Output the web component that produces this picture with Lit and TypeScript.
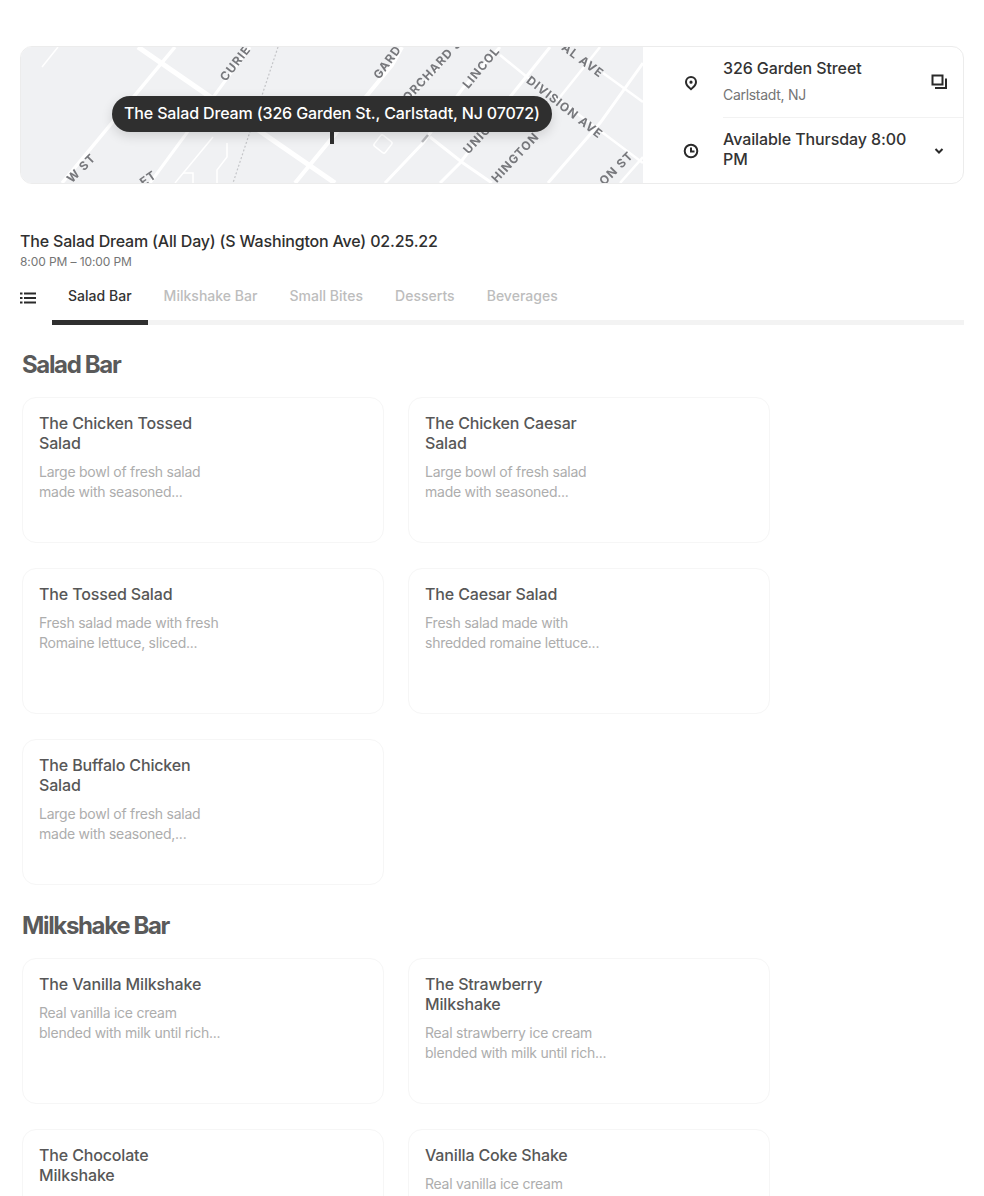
import { LitElement, html, css, svg } from "lit";
import { customElement } from "lit/decorators.js";

interface Item { name: string; desc: string }
const sections: { title: string; items: Item[] }[] = [
  { title: "Salad Bar", items: [
    { name: "The Chicken Tossed\nSalad", desc: "Large bowl of fresh salad\nmade with seasoned..." },
    { name: "The Chicken Caesar\nSalad", desc: "Large bowl of fresh salad\nmade with seasoned..." },
    { name: "The Tossed Salad", desc: "Fresh salad made with fresh\nRomaine lettuce, sliced..." },
    { name: "The Caesar Salad", desc: "Fresh salad made with\nshredded romaine lettuce..." },
    { name: "The Buffalo Chicken\nSalad", desc: "Large bowl of fresh salad\nmade with seasoned,..." },
  ]},
  { title: "Milkshake Bar", items: [
    { name: "The Vanilla Milkshake", desc: "Real vanilla ice cream\nblended with milk until rich..." },
    { name: "The Strawberry\nMilkshake", desc: "Real strawberry ice cream\nblended with milk until rich..." },
    { name: "The Chocolate\nMilkshake", desc: "Real chocolate ice cream\nblended with milk until rich..." },
    { name: "Vanilla Coke Shake", desc: "Real vanilla ice cream\nblended with Coke until rich..." },
  ]},
];
const tabs = ["Salad Bar", "Milkshake Bar", "Small Bites", "Desserts", "Beverages"];

const roads: [string, number][] = [
  ["M138 47 L335 183", 5],
  ["M62 183 L175 47", 3.5],
  ["M250 47 L150 183", 3],
  ["M58 47 L42 67", 1.5],
  ["M213 137 L175 183", 1.5],
  ["M227 143 L227 157 L217 170 L217 183", 1.5],
  ["M183 173 L193 173 L193 183", 1.5],
  ["M295 183 L392 65 L402 47", 4],
  ["M385 183 L423 143 L463 88 L500 47", 3],
  ["M410 97 L443 63", 2.5],
  ["M440 183 L460 163 L510 97 L550 47", 3],
  ["M430 137 L463 163 L492 183", 3],
  ["M500 55 L527 77 L550 93 L643 163", 2.5],
  ["M548 183 L600 123 L643 63", 3],
  ["M560 97 L600 47", 2.5],
  ["M603 73 L643 102", 2.5],
  ["M620 183 L643 157", 2.5],
];

const labels: [string, number, number, number][] = [
  ["CURIE", 235, 63, -52], ["GARD", 387, 62, -54], ["ORCHARD S", 432, 70, -47],
  ["LINCOL", 481, 67, -50], ["AL AVE", 583, 60, 37], ["DIVISION AVE", 565, 107, 38],
  ["UNIO", 477, 139, -47], ["HINGTON", 515, 157, -47], ["ON ST", 616, 168, -45],
  ["W ST", 81, 168, -45], ["ET", 148, 178, -35],
];

@customElement("app-root")
export class AppRoot extends LitElement {
  static styles = css`
    :host { display: block; height: 1196px; overflow: hidden; background: #fff; font-family: Inter, "Liberation Sans", sans-serif; color: #333; }
    .page { padding: 46px 20px 0; }
    .hero { display: flex; height: 138px; box-sizing: border-box; border: 1px solid #ececec; border-radius: 12px; overflow: hidden; }
    .map { position: relative; width: 622px; flex: none; background: #f0f1f3; overflow: hidden; }
    .map svg { display: block; width: 622px; height: 136px; filter: blur(.35px); }
    .map text { font: 700 12px Inter, sans-serif; fill: #77787c; letter-spacing: 1px; dominant-baseline: central; }
    .tip { position: absolute; left: 91px; top: 49px; height: 36px; box-sizing: border-box; padding: 0 12px; border-radius: 18px; background: #2f2f2f; color: #fff; font-size: 16px; line-height: 35px; white-space: nowrap; box-shadow: 0 4px 12px rgba(0,0,0,.14); letter-spacing: -.14px; font-weight: 500; }
    .pin { position: absolute; left: 309px; top: 85px; width: 4px; height: 12px; background: #2f2f2f; }
    .info { flex: 1; min-width: 0; display: flex; flex-direction: column; }
    .row { display: flex; align-items: center; }
    .row .icon { width: 80px; flex: none; box-sizing: border-box; display: flex; justify-content: center; padding-left: 16px; }
    .row-body { flex: 1; display: flex; align-items: center; min-width: 0; }
    .row-a { height: 71px; }
    .row-a .row-body { height: 100%; border-bottom: 1px solid #f2f2f2; box-sizing: border-box; }
    .row-a .row-text { margin-top: -2px; }
    .row-b { flex: 1; }
    .row-b .row-text { margin-top: -3px; }
    .row-text { flex: 1; font-size: 16px; line-height: 20px; color: #333; font-weight: 500; letter-spacing: -.1px; }
    .sub { display: block; font-size: 14px; line-height: 20px; color: #757575; font-weight: 400; margin-top: 7px; letter-spacing: -.3px; }
    .end { width: 48px; flex: none; display: flex; justify-content: center; }
    .title { margin-top: 47px; font-size: 16px; line-height: 20px; color: #2f2f2f; font-weight: 500; letter-spacing: -.18px; }
    .time { font-size: 12px; line-height: 16px; color: #757575; margin-top: 3px; letter-spacing: -.1px; }
    .tabbar { display: flex; height: 53px; margin-top: 2px; }
    .list { width: 32px; flex: none; padding-top: 18px; }
    .tabs { flex: 1; display: flex; border-bottom: 5px solid #f3f3f3; height: 48px; }
    .tab { padding: 14px 16px 0; font-size: 14px; line-height: 20px; color: #bdbdbd; letter-spacing: .02px; font-weight: 500; box-sizing: border-box; height: 48px; }
    .tab.on { color: #333; border-bottom: 5px solid #2f2f2f; height: 53px; }
    h2 { margin: 0 0 0 2px; font-size: 24px; line-height: 30px; font-weight: 700; color: #5a5a5a; letter-spacing: -1.35px; }
    .section { padding-top: 25px; }
    .section + .section { padding-top: 26px; }
    .grid { display: grid; grid-template-columns: 362px 362px; gap: 25px 24px; margin: 17px 0 0 2px; }
    .card { height: 146px; box-sizing: border-box; border: 1px solid #f6f6f6; border-radius: 14px; padding: 15px 16px; }
    .name { font-size: 16px; line-height: 20px; color: #575757; white-space: pre-line; font-weight: 500; letter-spacing: -.15px; }
    .desc { margin-top: 9px; font-size: 14px; line-height: 20px; color: #adadad; white-space: pre-line; letter-spacing: -.25px; }
  `;

  private map() {
    return html`<svg viewBox="21 47 622 136">
      ${roads.map(([d, w]) => svg`<path d=${d} fill="none" stroke="#fff" stroke-width=${w}></path>`)}
      <path d="M278 47 L233 183" fill="none" stroke="#c4c5c8" stroke-width="1.2" stroke-dasharray="2 2"></path>
      <rect x="376" y="137" width="14" height="14" rx="2" transform="rotate(38 383 144)" fill="none" stroke="#fff" stroke-width="1.5"></rect>
      <path d="M422 142 L428 135" stroke="#b9babd" stroke-width="2.5"></path>
      ${labels.map(([t, x, y, r]) => svg`<text text-anchor="middle" transform="translate(${x} ${y}) rotate(${r})">${t}</text>`)}
    </svg>`;
  }

  render() {
    return html`<div class="page">
      <div class="hero">
        <div class="map">
          ${this.map()}
          <div class="pin"></div>
          <div class="tip">The Salad Dream (326 Garden St., Carlstadt, NJ 07072)</div>
        </div>
        <div class="info">
          <div class="row row-a">
            <div class="icon"><svg width="16" height="16" viewBox="0 0 16 16"><path fill-rule="evenodd" fill="#2a2a2a" d="M8 1a6 6 0 0 1 6 6c0 2.2-1.2 4-2.4 5.3L8 15.6l-3.6-3.3C3.2 11 2 9.200 2 7a6 6 0 0 1 6-6zm0 2a4 4 0 0 0-4 4c0 1.500.8 2.800 1.800 3.800L8 12.900l2.200-2.100C11.200 9.800 12 8.500 12 7a4 4 0 0 0-4-4zm0 2.600a1.600 1.600 0 1 1 0 3.200 1.600 1.600 0 0 1 0-3.200z"></path></svg></div>
            <div class="row-body">
              <div class="row-text">326 Garden Street<span class="sub">Carlstadt, NJ</span></div>
              <div class="end"><svg width="16" height="16" viewBox="0 0 16 16" fill="none" stroke="#2a2a2a" stroke-width="2"><rect x="1.500" y="1.500" width="10" height="9"></rect><path d="M15 4.500V14H4"></path></svg></div>
            </div>
          </div>
          <div class="row row-b">
            <div class="icon"><svg width="16" height="16" viewBox="0 0 16 16" fill="none" stroke="#2a2a2a" stroke-width="2"><circle cx="8" cy="8" r="6.300"></circle><path d="M8 4.500V8.500H11.500"></path></svg></div>
            <div class="row-body">
              <div class="row-text">Available Thursday 8:00<br />PM</div>
              <div class="end"><svg width="10" height="6" viewBox="0 0 10 6" fill="none" stroke="#2a2a2a" stroke-width="2"><path d="M1.500 1L5 4.500 8.500 1"></path></svg></div>
            </div>
          </div>
        </div>
      </div>
      <div class="title">The Salad Dream (All Day) (S Washington Ave) 02.25.22</div>
      <div class="time">8:00 PM – 10:00 PM</div>
      <div class="tabbar">
        <div class="list"><svg width="16" height="16" viewBox="0 0 16 16" fill="#2a2a2a"><rect x="0" y="2.500" width="2.500" height="2"></rect><rect x="4" y="2.500" width="12" height="2"></rect><rect x="0" y="7" width="2.500" height="2"></rect><rect x="4" y="7" width="12" height="2"></rect><rect x="0" y="11.500" width="2.500" height="2"></rect><rect x="4" y="11.500" width="12" height="2"></rect></svg></div>
        <div class="tabs">${tabs.map((t, i) => html`<div class="tab ${i === 0 ? "on" : ""}">${t}</div>`)}</div>
      </div>
      ${sections.map(s => html`<div class="section">
        <h2>${s.title}</h2>
        <div class="grid">${s.items.map(it => html`<div class="card"><div class="name">${it.name}</div><div class="desc">${it.desc}</div></div>`)}</div>
      </div>`)}
    </div>`;
  }
}
